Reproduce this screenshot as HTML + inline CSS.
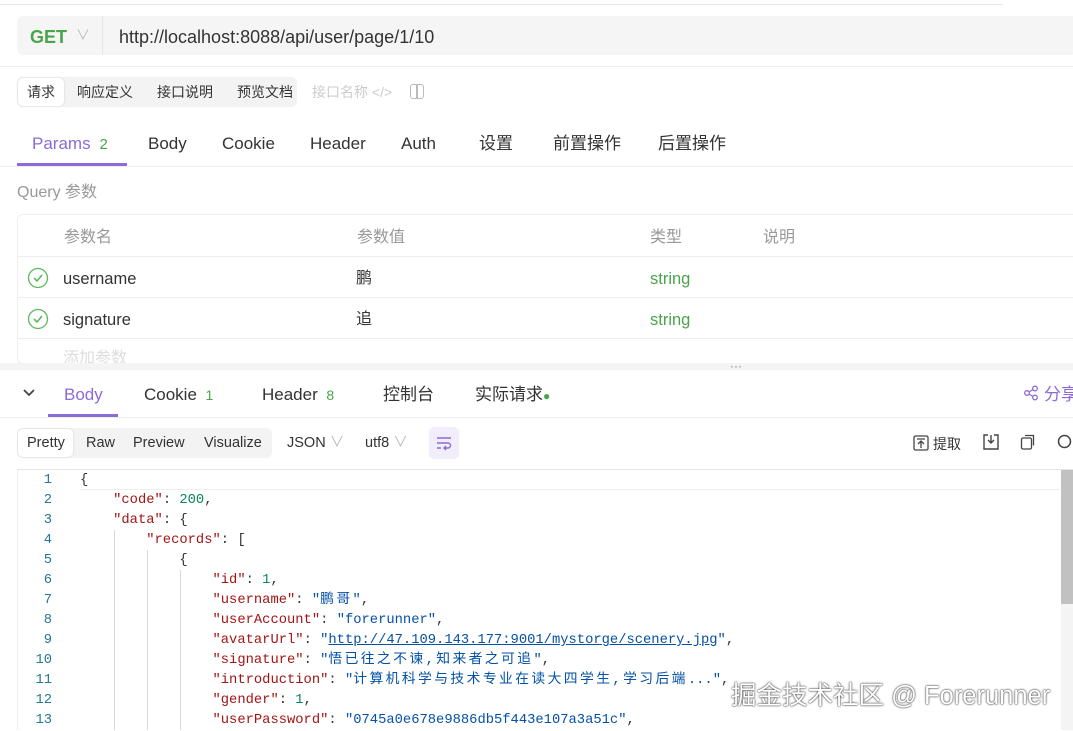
<!DOCTYPE html>
<html><head><meta charset="utf-8"><style>
*{margin:0;padding:0;box-sizing:border-box}
body{width:1073px;height:730px;overflow:hidden;background:#fff;font-family:"Liberation Sans","Noto Sans CJK SC",sans-serif;color:#333;position:relative}
.a{position:absolute;white-space:nowrap;line-height:1}
.g{color:#999}
.code{font-family:"Liberation Mono","Noto Sans CJK SC",monospace;font-size:13.8px;line-height:20px}
.c{letter-spacing:2.4px}
.k{color:#a31515}.s{color:#0451a5}.n{color:#098658}
.ln{color:#237893;width:52px;text-align:right;font-family:"Liberation Mono",monospace;font-size:13.8px;line-height:20px}
.guide{position:absolute;width:1px;background:#d8d8d8}
</style></head><body>
<div class="a" style="left:0;top:4px;width:1003px;height:1px;background:#e8e8e8"></div>
<div class="a" style="left:17px;top:16px;width:1060px;height:39px;background:#f5f5f5;border-radius:6px"></div>
<div class="a" style="left:30px;top:28px;font-size:18px;font-weight:bold;color:#4aa54a">GET</div>
<div class="a" style="left:76px;top:28px;font-size:14px;color:#bbb">&#8744;</div>
<div class="a" style="left:102px;top:16px;width:1px;height:39px;background:#e5e5e5"></div>
<div class="a" style="left:119px;top:28px;font-size:18px;color:#333">http://localhost:8088/api/user/page/1/10</div>
<div class="a" style="left:0;top:66px;width:1073px;height:1px;background:#eee"></div>
<div class="a" style="left:17px;top:77px;width:280px;height:30px;background:#f3f3f3;border-radius:6px"></div>
<div class="a" style="left:18px;top:78px;width:46px;height:28px;background:#fff;border-radius:5px;box-shadow:0 0 2px rgba(0,0,0,.15)"></div>
<div class="a" style="left:27px;top:85px;font-size:14px">请求</div>
<div class="a" style="left:77px;top:85px;font-size:14px">响应定义</div>
<div class="a" style="left:157px;top:85px;font-size:14px">接口说明</div>
<div class="a" style="left:237px;top:85px;font-size:14px">预览文档</div>
<div class="a" style="left:312px;top:85px;font-size:14px;color:#ccc">接口名称 &lt;/&gt;</div>
<div class="a" style="left:410px;top:84px;width:14px;height:15px;border:1.5px solid #bbb;border-radius:3px"></div>
<div class="a" style="left:416px;top:84px;width:1.5px;height:15px;background:#bbb"></div>
<div class="a" style="top:135px;left:32px;font-size:17px;color:#8c6bd6">Params <span style="color:#4aa54a;font-size:15px">&nbsp;2</span></div>
<div class="a" style="top:135px;left:148px;font-size:17px">Body</div>
<div class="a" style="top:135px;left:222px;font-size:17px">Cookie</div>
<div class="a" style="top:135px;left:310px;font-size:17px">Header</div>
<div class="a" style="top:135px;left:401px;font-size:17px">Auth</div>
<div class="a" style="top:135px;left:479px;font-size:17px">设置</div>
<div class="a" style="top:135px;left:553px;font-size:17px">前置操作</div>
<div class="a" style="top:135px;left:658px;font-size:17px">后置操作</div>
<div class="a" style="left:17px;top:163px;width:110px;height:3px;background:#8c6bd6"></div>
<div class="a" style="left:0;top:166px;width:1073px;height:1px;background:#eee"></div>
<div class="a g" style="left:17px;top:185px;font-size:16px">Query 参数</div>
<div class="a" style="left:17px;top:214px;width:1070px;height:150px;border:1px solid #eee;border-radius:6px"></div>
<div class="a g" style="left:64px;top:230px;font-size:16px">参数名</div>
<div class="a g" style="left:357px;top:230px;font-size:16px">参数值</div>
<div class="a g" style="left:650px;top:230px;font-size:16px">类型</div>
<div class="a g" style="left:763px;top:230px;font-size:16px">说明</div>
<div class="a" style="left:18px;top:256px;width:1060px;height:1px;background:#eee"></div>
<div class="a" style="left:18px;top:297px;width:1060px;height:1px;background:#eee"></div>
<div class="a" style="left:18px;top:338px;width:1060px;height:1px;background:#eee"></div>
<svg class="a" style="left:27px;top:267px" width="22" height="22"><circle cx="11" cy="11" r="9.5" fill="none" stroke="#5cb85c" stroke-width="1.3"/><path d="M7 11l3 3 5-6" fill="none" stroke="#5cb85c" stroke-width="1.6"/></svg>
<svg class="a" style="left:27px;top:308px" width="22" height="22"><circle cx="11" cy="11" r="9.5" fill="none" stroke="#5cb85c" stroke-width="1.3"/><path d="M7 11l3 3 5-6" fill="none" stroke="#5cb85c" stroke-width="1.6"/></svg>
<div class="a" style="left:63px;top:271px;font-size:16.5px">username</div>
<div class="a" style="left:356px;top:271px;font-size:16px">鹏</div>
<div class="a" style="left:650px;top:271px;font-size:16.5px;color:#4aa54a">string</div>
<div class="a" style="left:63px;top:312px;font-size:16.5px">signature</div>
<div class="a" style="left:356px;top:312px;font-size:16px">追</div>
<div class="a" style="left:650px;top:312px;font-size:16.5px;color:#4aa54a">string</div>
<div class="a" style="left:63px;top:351px;font-size:16px;color:#ddd">添加参数</div>
<div class="a" style="left:0;top:363px;width:1073px;height:7px;background:#f4f4f4"></div>
<div class="a" style="left:730px;top:360px;font-size:12px;color:#888">···</div>
<svg class="a" style="left:22px;top:388px" width="14" height="10"><path d="M2 2l5 5 5-5" fill="none" stroke="#444" stroke-width="1.8"/></svg>
<div class="a" style="top:386px;left:64px;font-size:17px;color:#8c6bd6">Body</div>
<div class="a" style="top:386px;left:144px;font-size:17px">Cookie <span style="color:#4aa54a;font-size:14px">&nbsp;1</span></div>
<div class="a" style="top:386px;left:262px;font-size:17px">Header <span style="color:#4aa54a;font-size:14px">&nbsp;8</span></div>
<div class="a" style="top:386px;left:383px;font-size:17px">控制台</div>
<div class="a" style="top:386px;left:475px;font-size:17px">实际请求<span style="color:#4aa54a;font-size:12px">●</span></div>
<svg class="a" style="left:1023px;top:385px" width="16" height="16"><circle cx="4" cy="8" r="2.3" fill="none" stroke="#8c6bd6" stroke-width="1.3"/><circle cx="12" cy="3.5" r="2.3" fill="none" stroke="#8c6bd6" stroke-width="1.3"/><circle cx="12" cy="12.5" r="2.3" fill="none" stroke="#8c6bd6" stroke-width="1.3"/><path d="M6 7l4-2.5M6 9l4 2.5" stroke="#8c6bd6" stroke-width="1.3"/></svg>
<div class="a" style="top:386px;left:1044px;font-size:17px;color:#8c6bd6">分享</div>
<div class="a" style="left:48px;top:414px;width:70px;height:3px;background:#8c6bd6"></div>
<div class="a" style="left:0;top:417px;width:1073px;height:1px;background:#eee"></div>
<div class="a" style="left:17px;top:428px;width:255px;height:30px;background:#f3f3f3;border-radius:6px"></div>
<div class="a" style="left:18px;top:429px;width:55px;height:28px;background:#fff;border-radius:5px;box-shadow:0 0 2px rgba(0,0,0,.15)"></div>
<div class="a" style="left:27px;top:436px;font-size:14.5px">Pretty</div>
<div class="a" style="left:86px;top:436px;font-size:14.5px">Raw</div>
<div class="a" style="left:133px;top:436px;font-size:14.5px">Preview</div>
<div class="a" style="left:204px;top:436px;font-size:14.5px">Visualize</div>
<div class="a" style="left:287px;top:436px;font-size:14.5px">JSON <span style="color:#bbb">&#8744;</span></div>
<div class="a" style="left:365px;top:436px;font-size:14.5px">utf8 <span style="color:#bbb">&#8744;</span></div>
<div class="a" style="left:429px;top:427px;width:30px;height:32px;background:#f1edfb;border-radius:5px"></div>
<svg class="a" style="left:436px;top:435px" width="16" height="16"><path d="M1 3h14M1 8h11a2.5 2.5 0 010 5H8M1 13h4M10 11l-2 2 2 2" fill="none" stroke="#8c6bd6" stroke-width="1.4"/></svg>
<svg class="a" style="left:913px;top:435px" width="16" height="16"><rect x="1" y="1" width="14" height="14" rx="1.5" fill="none" stroke="#444" stroke-width="1.3"/><path d="M4 4h8M8 13V6M5 9l3-3 3 3" fill="none" stroke="#444" stroke-width="1.3"/></svg>
<div class="a" style="left:933px;top:437px;font-size:14px">提取</div>
<svg class="a" style="left:983px;top:434px" width="16" height="16"><path d="M5 1H1v14h14V1h-4M8 1v8M5 6l3 3 3-3" fill="none" stroke="#444" stroke-width="1.4"/></svg>
<svg class="a" style="left:1020px;top:434px" width="16" height="16"><rect x="1.5" y="4" width="10" height="11" rx="1.5" fill="none" stroke="#444" stroke-width="1.3"/><path d="M5 1.5h8.5v10" fill="none" stroke="#444" stroke-width="1.3"/></svg>
<svg class="a" style="left:1057px;top:434px" width="16" height="16"><circle cx="7.5" cy="7.5" r="6" fill="none" stroke="#444" stroke-width="1.5"/></svg>
<div class="a" style="left:17px;top:469px;width:1060px;height:1px;background:#e5e5e5"></div>
<div class="a" style="left:17px;top:470px;width:1px;height:260px;background:#eee"></div>
<div class="a" style="left:80px;top:470px;width:980px;height:20px;border-bottom:1px solid #eee"></div>
<div class="a" style="left:1061px;top:470px;width:12px;height:260px;background:#f4f4f4"></div>
<div class="a" style="left:1061px;top:470px;width:12px;height:134px;background:#c1c1c1"></div>
<div class="a ln" style="left:0;top:471px">1<br>2<br>3<br>4<br>5<br>6<br>7<br>8<br>9<br>10<br>11<br>12<br>13</div>
<div class="guide" style="left:114px;top:530px;height:200px"></div>
<div class="guide" style="left:147px;top:550px;height:180px"></div>
<div class="guide" style="left:180px;top:570px;height:160px"></div>
<div class="a code" style="left:80px;top:471px;color:#333"><pre style="font:inherit;line-height:20px">{
    <span class="k">"code"</span>: <span class="n">200</span>,
    <span class="k">"data"</span>: {
        <span class="k">"records"</span>: [
            {
                <span class="k">"id"</span>: <span class="n">1</span>,
                <span class="k">"username"</span>: <span class="s">"<span class="c">鹏哥</span>"</span>,
                <span class="k">"userAccount"</span>: <span class="s">"forerunner"</span>,
                <span class="k">"avatarUrl"</span>: <span class="s">"<u>http://47.109.143.177:9001/mystorge/scenery.jpg</u>"</span>,
                <span class="k">"signature"</span>: <span class="s">"<span class="c">悟已往之不谏,知来者之可追</span>"</span>,
                <span class="k">"introduction"</span>: <span class="s">"<span class="c">计算机科学与技术专业在读大四学生,学习后端</span>..."</span>,
                <span class="k">"gender"</span>: <span class="n">1</span>,
                <span class="k">"userPassword"</span>: <span class="s">"0745a0e678e9886db5f443e107a3a51c"</span>,</pre></div>
<div class="a" style="left:731px;top:684px;font-size:25.5px;color:#fff;text-shadow:0 0 2px #333,0 0 1px #333">掘金技术社区 @ Forerunner</div>
</body></html>
